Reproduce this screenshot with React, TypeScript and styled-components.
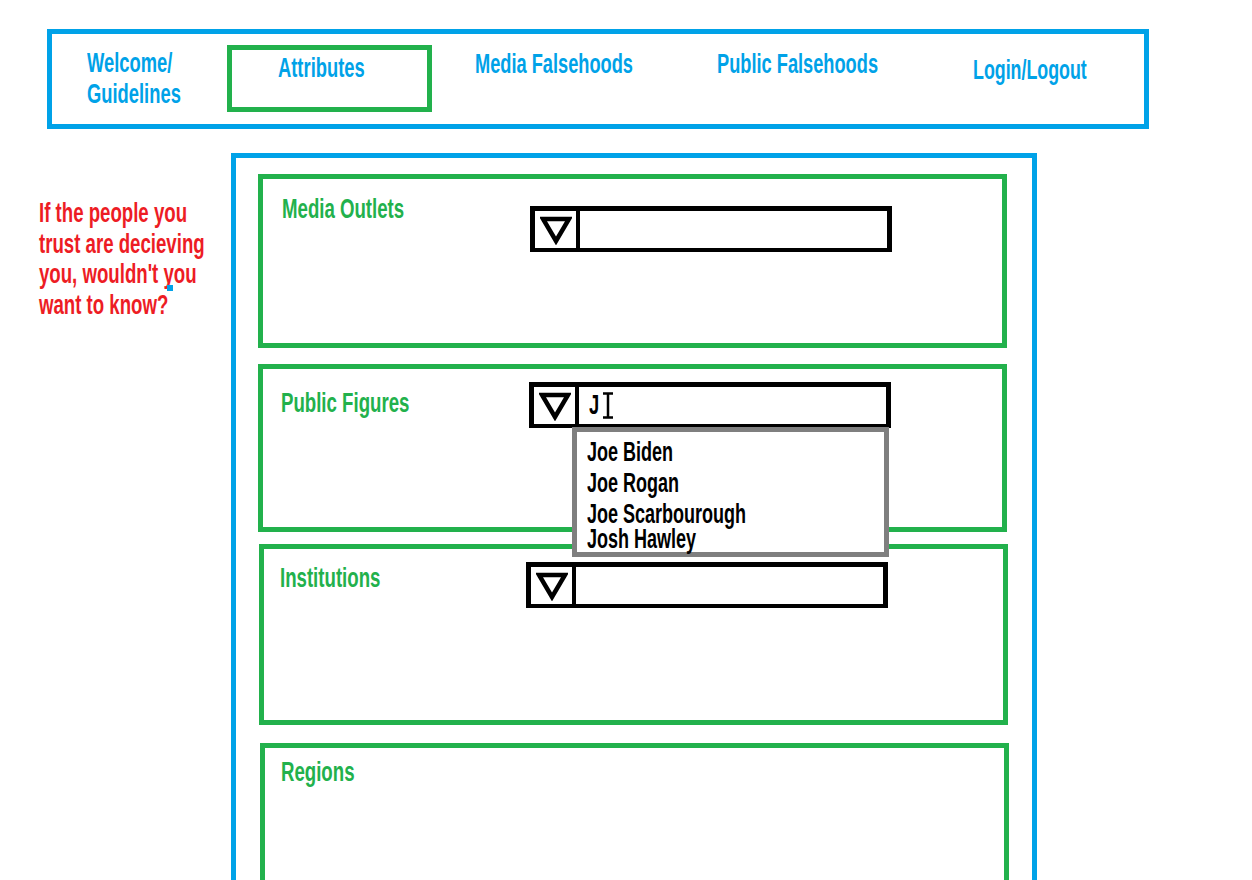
import React from "react";
import styled, { createGlobalStyle } from "styled-components";

const BLUE = "#00A2E8";
const GREEN = "#22B14C";
const RED = "#ED1C24";
const GRAY = "#7F7F7F";

const GlobalStyle = createGlobalStyle`
  html, body {
    margin: 0;
    padding: 0;
    background: #ffffff;
    overflow: hidden;
    height: 880px;
  }
  body {
    font-family: "Liberation Sans", Arial, sans-serif;
    font-weight: 700;
    font-size: 27px;
    line-height: 31px;
  }
`;

/* condensed display face: Liberation Sans squeezed horizontally */
const Cond = styled.span<{ $sx?: number }>`
  display: inline-block;
  white-space: nowrap;
  transform: scaleX(${(p) => p.$sx ?? 0.68});
  transform-origin: left center;
`;

const Page = styled.div`
  padding-top: 29px;
  width: 1252px;
  height: 851px;
  display: flex;
  flex-direction: column;
`;

const Nav = styled.nav`
  margin-left: 47px;
  width: 1102px;
  height: 100px;
  box-sizing: border-box;
  border: 5px solid ${BLUE};
  display: flex;
  align-items: flex-start;
`;

const NavLink = styled.div<{ $ml: number; $mt: number; $w?: number }>`
  margin-left: ${(p) => p.$ml}px;
  margin-top: ${(p) => p.$mt}px;
  width: ${(p) => (p.$w ? `${p.$w}px` : "auto")};
  flex: none;
  color: ${BLUE};
`;

const ActiveTab = styled.div`
  margin-top: 11px;
  width: 205px;
  height: 67px;
  flex: none;
  box-sizing: border-box;
  border: 5px solid ${GREEN};
  padding: 3px 0 0 46px;
  color: ${BLUE};
`;

const Body = styled.div`
  margin-top: 24px;
  display: flex;
  flex: 1;
  min-height: 0;
`;

const Aside = styled.aside`
  position: relative;
  width: 231px;
  flex: none;
  box-sizing: border-box;
  padding: 45px 0 0 39px;
  color: ${RED};
  line-height: 30.7px;
`;

const Speck = styled.span`
  position: absolute;
  left: 167px;
  top: 132px;
  width: 6px;
  height: 6px;
  background: ${BLUE};
`;

const Main = styled.main`
  width: 806px;
  flex: none;
  box-sizing: border-box;
  border: 5px solid ${BLUE};
  border-bottom: none;
  display: flex;
  flex-direction: column;
`;

const Section = styled.section<{ $mt: number; $ml: number; $h: number; $comboX: number }>`
  margin-top: ${(p) => p.$mt}px;
  margin-left: ${(p) => p.$ml}px;
  width: 749px;
  height: ${(p) => p.$h}px;
  flex: none;
  box-sizing: border-box;
  border: 5px solid ${GREEN};
  display: grid;
  grid-template-columns: ${(p) => p.$comboX}px 362px;
  align-items: start;
`;

const Label = styled.h2<{ $top: number; $left: number }>`
  margin: 0;
  padding: ${(p) => p.$top}px 0 0 ${(p) => p.$left}px;
  font-size: 27px;
  line-height: 31px;
  font-weight: 700;
  color: ${GREEN};
`;

const Combo = styled.div<{ $top: number }>`
  position: relative;
  margin-top: ${(p) => p.$top}px;
  height: 46px;
  box-sizing: border-box;
  border: 5px solid #000;
  border-bottom-width: 4px;
  display: flex;
`;

const ArrowCell = styled.div`
  width: 41px;
  flex: none;
  border-right: 4px solid #000;
  display: flex;
  align-items: center;
  justify-content: center;
`;

const Field = styled.div`
  flex: 1;
  display: flex;
  align-items: center;
  padding-left: 10px;
  color: #000;
`;

const Caret = styled.span`
  display: flex;
  margin-left: -2px;
`;

const List = styled.ul`
  position: absolute;
  left: 38px;
  top: calc(100% + 3px);
  width: 317px;
  height: 130px;
  margin: 0;
  box-sizing: border-box;
  border: 5px solid ${GRAY};
  background: #fff;
  list-style: none;
  padding: 5px 0 0 10px;
  z-index: 2;
`;

const Option = styled.li<{ $tight?: boolean }>`
  color: #000;
  line-height: 31px;
  margin-top: ${(p) => (p.$tight ? -6 : 0)}px;
`;

const Arrow = () => (
  <svg width="32" height="30" viewBox="0 0 32 30">
    <polygon
      points="3,4 29,4 16,26"
      fill="none"
      stroke="#000"
      strokeWidth="4.5"
      strokeLinejoin="miter"
    />
  </svg>
);

const IBeam = () => (
  <svg width="12" height="27" viewBox="0 0 12 27">
    <path d="M1 1.5 H11 M6 1.5 V25.5 M1 25.5 H11" stroke="#000" strokeWidth="2.5" fill="none" />
  </svg>
);

const sections = [
  { label: "Media Outlets", mt: 16, ml: 22, h: 174, comboX: 267, labelTop: 15, labelLeft: 19, comboTop: 27, combo: true },
  { label: "Public Figures", mt: 16, ml: 22, h: 168, comboX: 266, labelTop: 19, labelLeft: 18, comboTop: 13, combo: true, open: true },
  { label: "Institutions", mt: 12, ml: 23, h: 181, comboX: 262, labelTop: 14, labelLeft: 16, comboTop: 13, combo: true },
  { label: "Regions", mt: 18, ml: 24, h: 400, comboX: 267, labelTop: 9, labelLeft: 16, comboTop: 0, combo: false },
];

const names = ["Joe Biden", "Joe Rogan", "Joe Scarbourough", "Josh Hawley"];

export default function App() {
  return (
    <>
      <GlobalStyle />
      <Page>
        <Nav>
          <NavLink $ml={35} $mt={14} $w={140}>
            <Cond>
              Welcome/
              <br />
              Guidelines
            </Cond>
          </NavLink>
          <ActiveTab>
            <Cond>Attributes</Cond>
          </ActiveTab>
          <NavLink $ml={43} $mt={15} $w={242}>
            <Cond $sx={0.675}>Media Falsehoods</Cond>
          </NavLink>
          <NavLink $ml={0} $mt={15} $w={256}>
            <Cond $sx={0.675}>Public Falsehoods</Cond>
          </NavLink>
          <NavLink $ml={0} $mt={21}>
            <Cond $sx={0.66}>Login/Logout</Cond>
          </NavLink>
        </Nav>
        <Body>
          <Aside>
            <Cond $sx={0.69}>
              If the people you
              <br />
              trust are decieving
              <br />
              you, wouldn't you
              <br />
              want to know?
            </Cond>
            <Speck />
          </Aside>
          <Main>
            {sections.map((s) => (
              <Section key={s.label} $mt={s.mt} $ml={s.ml} $h={s.h} $comboX={s.comboX}>
                <Label $top={s.labelTop} $left={s.labelLeft}>
                  <Cond $sx={0.69}>{s.label}</Cond>
                </Label>
                {s.combo && (
                  <Combo $top={s.comboTop}>
                    <ArrowCell>
                      <Arrow />
                    </ArrowCell>
                    <Field>
                      {s.open && (
                        <>
                          <Cond $sx={0.68}>J</Cond>
                          <Caret>
                            <IBeam />
                          </Caret>
                        </>
                      )}
                    </Field>
                    {s.open && (
                      <List>
                        {names.map((n, i) => (
                          <Option key={n} $tight={i === 3}>
                            <Cond $sx={0.667}>{n}</Cond>
                          </Option>
                        ))}
                      </List>
                    )}
                  </Combo>
                )}
              </Section>
            ))}
          </Main>
        </Body>
      </Page>
    </>
  );
}
